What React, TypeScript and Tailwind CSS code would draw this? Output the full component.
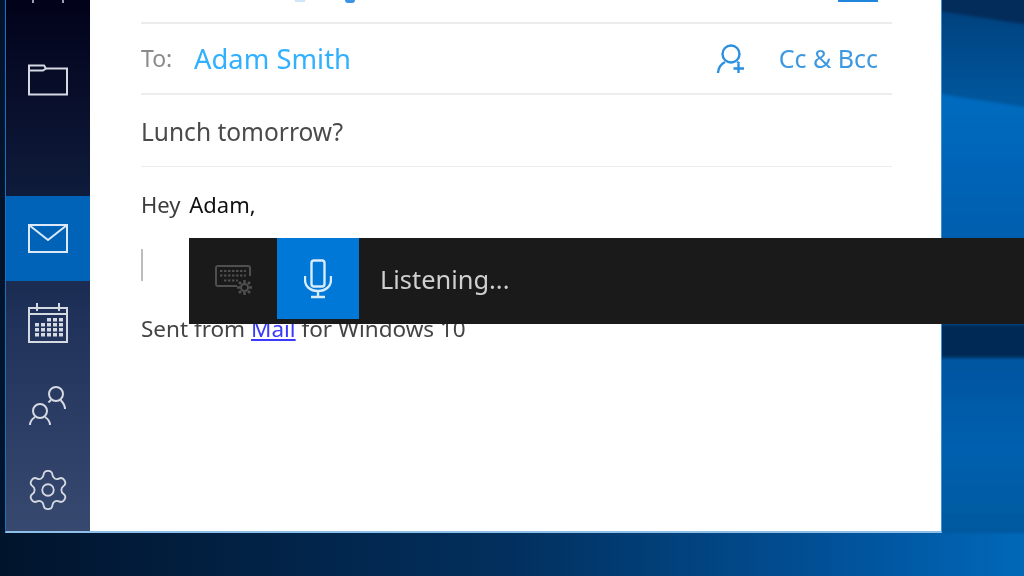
import { Settings } from 'lucide-react';

const sidebarIcon = 'fill-none stroke-[#d5d9e2] stroke-2';

function Wallpaper() {
  return (
    <svg className="absolute inset-0 h-full w-full" viewBox="0 0 1024 576" preserveAspectRatio="none">
      <defs>
        <linearGradient id="bottom" x1="0" y1="0" x2="1" y2="0">
          <stop offset="0" stopColor="#01142c" />
          <stop offset="0.5" stopColor="#02305e" />
          <stop offset="0.85" stopColor="#01559f" />
          <stop offset="1" stopColor="#0068b8" />
        </linearGradient>
        <linearGradient id="upper" x1="0" y1="0" x2="0" y2="1">
          <stop offset="0" stopColor="#01407c" />
          <stop offset="1" stopColor="#01589f" />
        </linearGradient>
        <linearGradient id="bright" x1="0" y1="0" x2="0" y2="1">
          <stop offset="0" stopColor="#006cc0" />
          <stop offset="1" stopColor="#0054a2" />
        </linearGradient>
        <linearGradient id="lower" x1="0" y1="0" x2="0" y2="1">
          <stop offset="0" stopColor="#00559f" />
          <stop offset="0.5" stopColor="#005fae" />
          <stop offset="1" stopColor="#01599f" />
        </linearGradient>
        <filter id="soft">
          <feGaussianBlur stdDeviation="1.500" />
        </filter>
      </defs>
      <rect width="1024" height="576" fill="url(#bottom)" />
      <rect x="900" width="124" height="30" fill="#032c5a" />
      <g filter="url(#soft)">
        <polygon points="900,5 1030,25 1030,110 900,90" fill="url(#upper)" />
        <polygon points="900,88 1030,108 1030,330 900,330" fill="url(#bright)" />
        <rect x="900" y="358" width="130" height="175" fill="url(#lower)" />
        <rect x="900" y="324" width="130" height="34" fill="#012a55" />
      </g>
    </svg>
  );
}

function FolderIcon() {
  return (
    <svg width="42" height="34" viewBox="0 0 42 34" className={sidebarIcon}>
      <path d="M2 31.500V2.500H17L19 5.500H40V31.500H2Z" />
      <path d="M2 7.500H16L19 5.500" />
    </svg>
  );
}

function MailIcon() {
  return (
    <svg width="42" height="32" viewBox="0 0 42 32" className="fill-none stroke-[#dbe9f8] stroke-2">
      <rect x="2" y="2" width="38" height="27" />
      <path d="M2 2L21 17L40 2" />
    </svg>
  );
}

function CalendarIcon() {
  return (
    <svg width="42" height="42" viewBox="0 0 42 42" className={sidebarIcon}>
      <path d="M2 6H40V40H2ZM2 12H40M10 1V9M32 1V9" />
      <g className="fill-[#d5d9e2] stroke-none">
        {[17, 22, 27, 32].map((y) =>
          [9, 15, 21, 27, 33].map((x) =>
            y === 17 && x < 20 ? null : <rect key={`${x}-${y}`} x={x - 1} y={y - 1} width="4" height="3.500" />,
          ),
        )}
      </g>
    </svg>
  );
}

function PeopleIcon() {
  return (
    <svg width="40" height="42" viewBox="0 0 40 42" className={sidebarIcon}>
      <circle cx="28" cy="8" r="7" />
      <path d="M20.500 16.500C21 15.500 22 15 23 14M32.500 14C35 16.500 37 19 37 23" />
      <circle cx="12" cy="25" r="7" />
      <path d="M2 39C2 35 4 33 7 31M17 31C20 33 22 35 22 39" />
    </svg>
  );
}

function AddPersonIcon() {
  return (
    <svg width="30" height="30" viewBox="0 0 30 30" className="fill-none stroke-[#2b8fe0] stroke-[2.4]">
      <circle cx="15" cy="10" r="8.500" />
      <path d="M2 29C2.500 23.500 5 20 9 18M21 18C22 18.500 23 19 23.500 19.500" />
      <path d="M22.500 20V29M17.500 24.500H28" />
    </svg>
  );
}

function KeyboardGearIcon() {
  return (
    <svg width="40" height="32" viewBox="0 0 40 32" className="fill-none stroke-[#4f4f4f] stroke-2">
      <path d="M22 21H3C2 21 1 20 1 19V3C1 2 2 1 3 1H33C34 1 35 2 35 3V11" />
      <path d="M5 6H31M5 10.500H31M9 15.500H23" strokeDasharray="2.500 1.500" />
      <circle cx="29.500" cy="22.500" r="3.500" />
      <path d="M29.500 15V18M29.500 27V30M22 22.500H25M34 22.500H37M24 17L26 19M33 26L35 28M35 17L33 19M26 26L24 28" strokeWidth="2.500" />
    </svg>
  );
}

function MicIcon() {
  return (
    <svg width="28" height="40" viewBox="0 0 28 40" className="fill-none stroke-[#d8ecfb] stroke-[2.4]">
      <rect x="7.500" y="1.500" width="13" height="26" rx="2.500" />
      <path d="M1 17V21C1 27 6 32 14 32C22 32 27 27 27 21V17M14 32V37M7 38H21" />
    </svg>
  );
}

function SidebarRow({ active, height, children }: { active?: boolean; height: string; children: React.ReactNode }) {
  return (
    <div className={`flex items-center justify-center ${height} ${active ? 'bg-[#0063b8]' : ''}`}>{children}</div>
  );
}

export default function App() {
  return (
    <div className="relative h-[576px] w-[1024px] overflow-hidden font-['Noto_Sans',sans-serif]">
      <Wallpaper />

      <div className="relative ml-[5px] flex h-[533px] w-[937px] border-r border-b-2 border-l border-r-[#3f90d8] border-b-[#8dbfe8] border-l-[#1a70c0] blur-[0.6px]">
        <aside className="flex w-[84px] shrink-0 flex-col bg-[linear-gradient(180deg,#02021a_0%,#0e1a3a_35%,#20325a_60%,#37496f_100%)]">
          <div className="flex h-[3px] justify-center gap-[28px]">
            <span className="h-[3px] w-[2px] bg-[#9aa0ad]" />
            <span className="h-[3px] w-[2px] bg-[#9aa0ad]" />
          </div>
          <SidebarRow height="h-[154px]"><FolderIcon /></SidebarRow>
          <div className="h-[39px]" />
          <SidebarRow active height="h-[86px]"><MailIcon /></SidebarRow>
          <SidebarRow height="h-[84px]"><CalendarIcon /></SidebarRow>
          <SidebarRow height="h-[83px]"><PeopleIcon /></SidebarRow>
          <SidebarRow height="h-[83px]"><Settings size={46} strokeWidth={0.95} className="text-[#d5d9e2]" /></SidebarRow>
        </aside>

        <main className="min-w-0 flex-1 bg-white pr-[49px] pl-[51px]">
          <div className="relative h-[24px] border-b-2 border-[#ececec]">
            <span className="absolute top-0 left-[154px] h-[2px] w-[10px] bg-[#cfe5f8]" />
            <span className="absolute top-0 left-[204px] h-[3px] w-[10px] rounded-b-full bg-[#3c95e4]" />
            <span className="absolute top-0 right-[14px] h-[2px] w-[40px] bg-[#1f86dc]" />
          </div>

          <div className="flex h-[71px] items-center border-b-2 border-[#ececec]">
            <span className="w-[53px] text-[23px] text-[#8a8a8a]">To:</span>
            <span className="text-[27.400px] text-[#30b0ff]">Adam Smith</span>
            <div className="ml-auto flex items-center gap-[33px] pr-[14px]">
              <AddPersonIcon />
              <span className="text-[25px] text-[#3d98e2]">Cc &amp; Bcc</span>
            </div>
          </div>

          <div className="flex h-[72px] items-center border-b border-[#ececec] pt-[3px] text-[24.500px] text-[#4a4a4a]">
            Lunch tomorrow?
          </div>

          <p className="pt-[22px] text-[22px] leading-[30px] text-[#3c3c3c]">
            Hey <span className="ml-[3px] text-[#111]">Adam,</span>
          </p>
          <div className="mt-[30px] h-[32px] w-[2px] bg-[#bdbdbd]" />
          <p className="mt-[33px] text-[22.500px] leading-[30px] text-[#444]">
            Sent from <a className="text-[#3a3aff] underline">Mail</a> for Windows 10
          </p>
        </main>
      </div>

      <div className="absolute top-[238px] right-0 left-[189px] flex h-[86px] items-start bg-[#1a1a1a] blur-[0.4px]">
        <div className="flex h-[81px] w-[88px] items-center justify-center pt-[4px] pl-[4px]">
          <KeyboardGearIcon />
        </div>
        <div className="flex h-[81px] w-[82px] items-center justify-center bg-[#0078d7]">
          <MicIcon />
        </div>
        <span className="flex h-[83px] items-center pl-[21px] text-[25.400px] text-[#cfcfcf]">Listening...</span>
      </div>
    </div>
  );
}
